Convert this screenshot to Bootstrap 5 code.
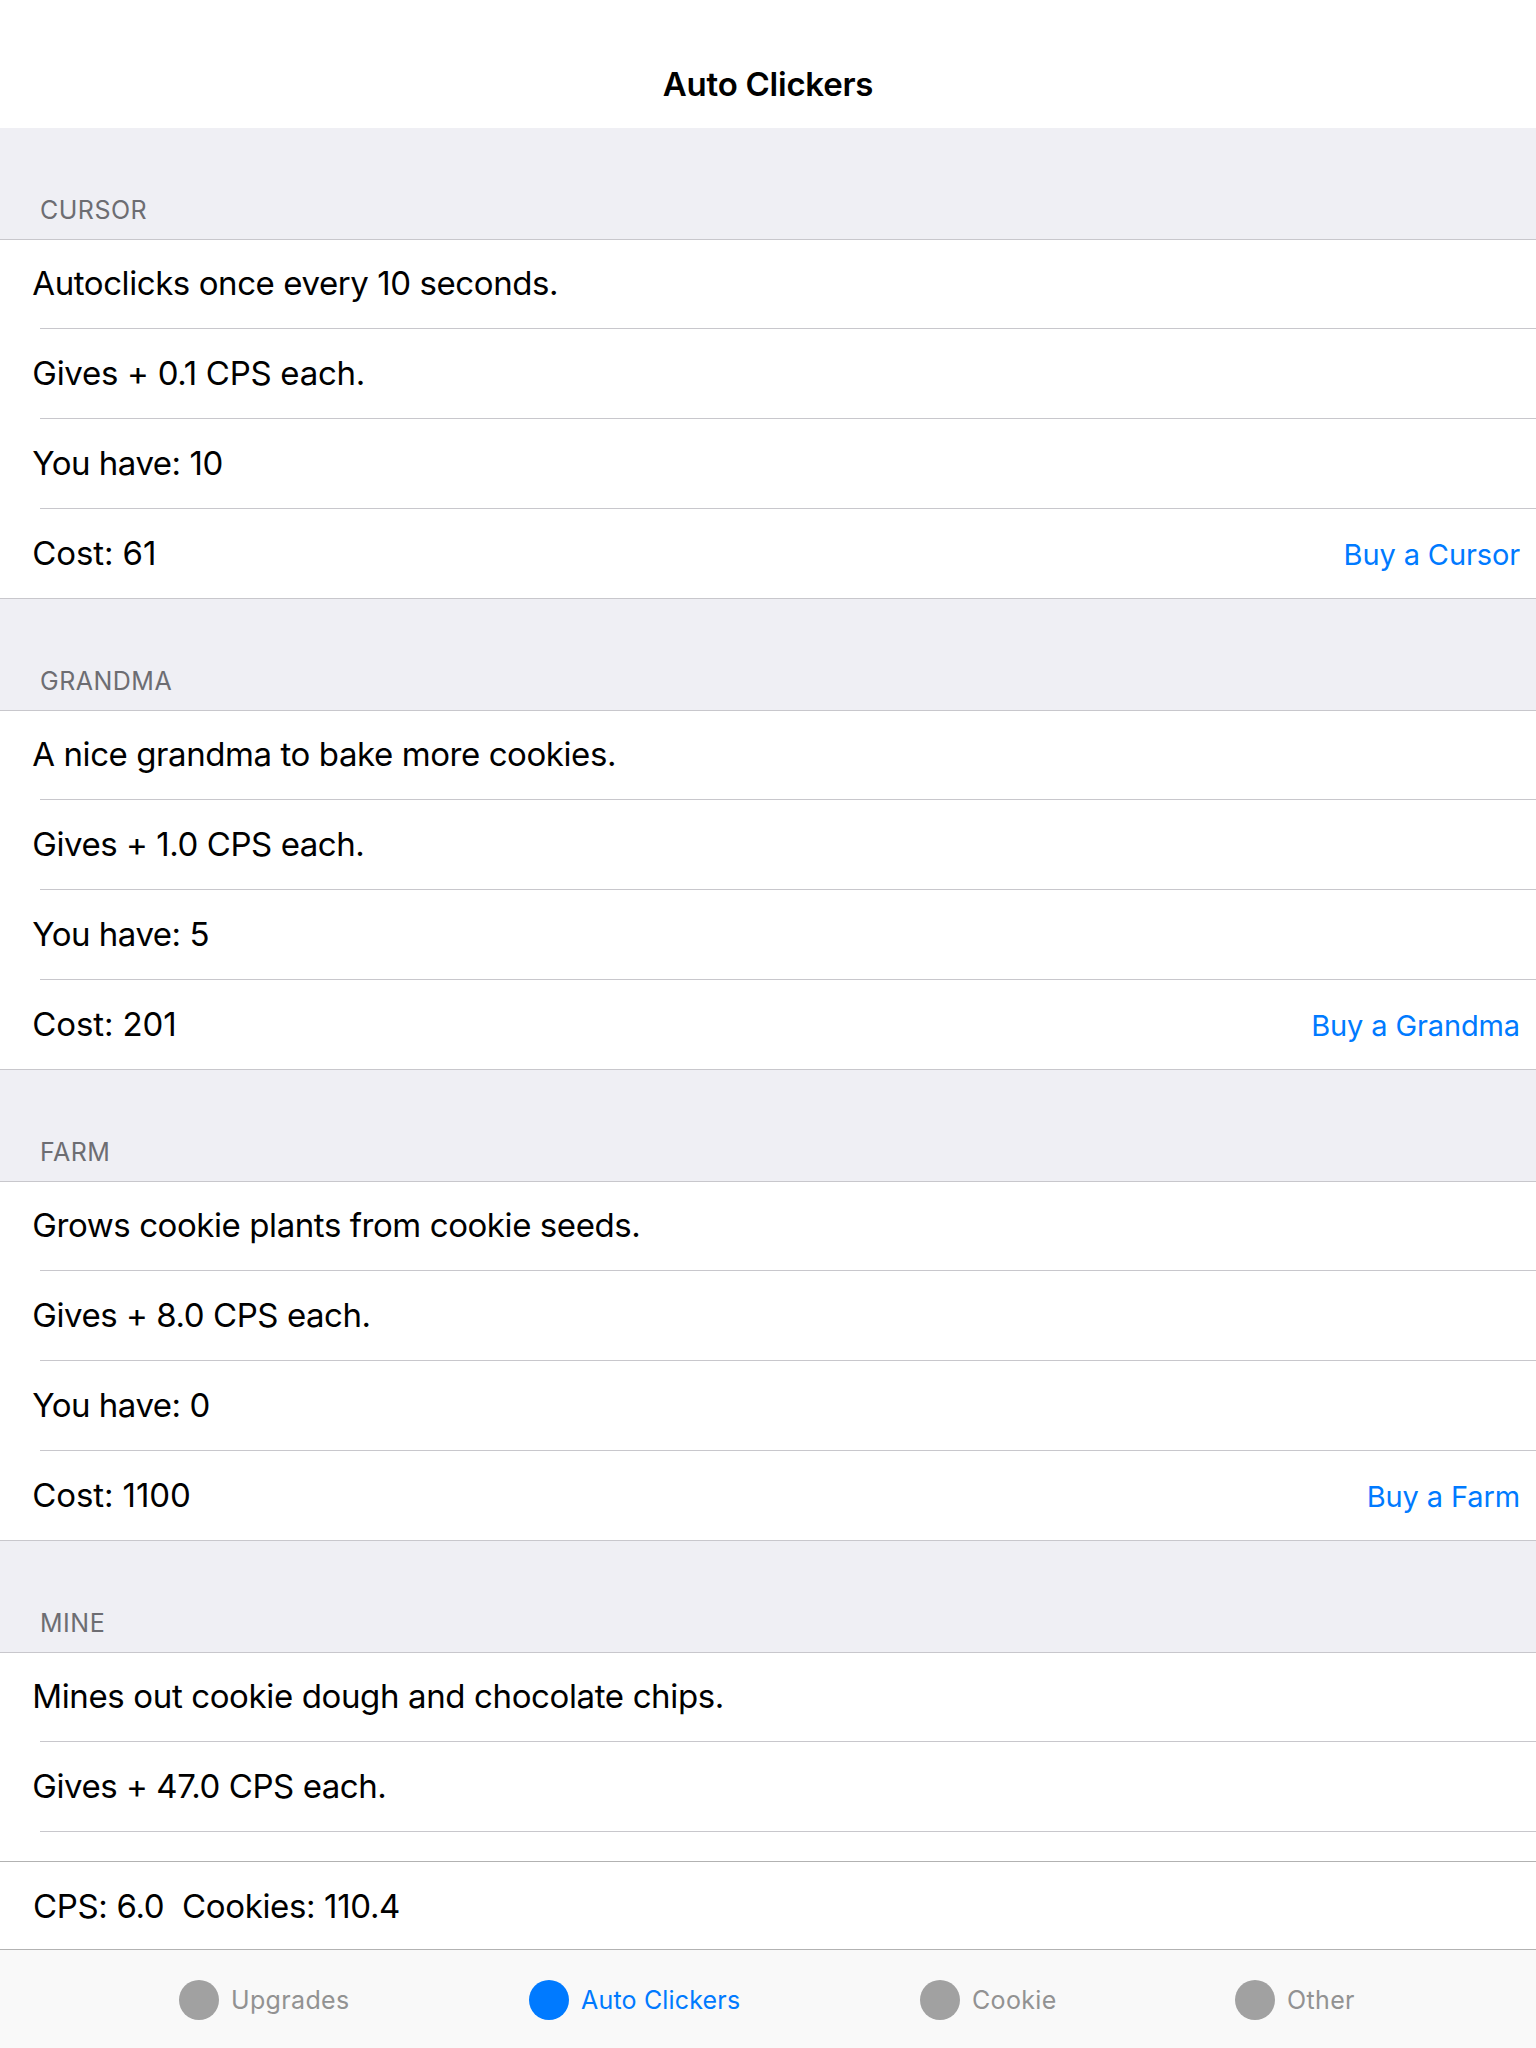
<!DOCTYPE html>
<html lang="en">
<head>
<meta charset="utf-8">
<meta name="viewport" content="width=device-width, initial-scale=1">
<title>Auto Clickers</title>
<link href="https://cdn.jsdelivr.net/npm/bootstrap@5.3.0/dist/css/bootstrap.min.css" rel="stylesheet">
<style>
  body { font-family: Inter, "Liberation Sans", sans-serif; font-size: 33px; line-height: 40px; color: #000; font-kerning: normal; }
  .app-screen { height: 2048px; }
  .title-bar { height: 128px; padding-top: 64px; }
  .title-bar h1 { font-size: 33px; line-height: 40px; letter-spacing: -.25px; font-weight: 600; }
  .shop { background: #efeff4; min-height: 0; }
  .section-title { height: 112px; padding: 67px 0 0 40px; font-size: 25px; line-height: 30px; letter-spacing: .5px; color: #6d6d72; font-weight: 400; border-bottom: 1px solid #c8c7cc; }
  .item-list { --bs-list-group-border-radius: 0; }
  .item-list .list-group-item { height: 90px; padding: 24px 16px 0 32.3px; color: #000; background: #fff; border: 0; display: flex; letter-spacing: -.44px; }
  .item-list .list-group-item:first-child { height: 89px; padding-top: 23px; letter-spacing: -.42px; }
  .item-list .list-group-item:not(.buy-row) { background: linear-gradient(#c8c7cc, #c8c7cc) 40px 100% / 100% 1px no-repeat #fff; }
  .item-list .tenth-row { letter-spacing: -.28px; }
  .item-list .have-row { letter-spacing: -.48px; }
  .item-list .buy-row { border-bottom: 1px solid #c8c7cc; letter-spacing: -.1px; }
  .buy-row .btn { margin-top: 2px; font-size: 29px; line-height: 40px; letter-spacing: -.12px; color: #007aff; }
  .mine-list .list-group-item:first-child { letter-spacing: -.37px; }
  .status-bar { height: 88px; padding: 24px 0 0 33px; border-top: 1px solid #b2b2b2; background: #fff; letter-spacing: -.35px; white-space: pre; }
  .tab-bar { height: 99px; padding: 2px 0 0 179px; gap: 180px; border-top: 1px solid #b2b2b2; background: #f9f9f9; font-size: 25px; line-height: 30px; }
  .tab-bar .nav-link { padding: 0; color: #929292; gap: 12px; white-space: nowrap; letter-spacing: .35px; }
  .tab-bar .active { color: #007aff; letter-spacing: .18px; }
  .tab-bar svg { width: 40px; height: 40px; fill: #a1a1a1; flex: none; }
  .tab-bar .active svg { fill: #007aff; }
  .tab-upgrades { width: 170px; }
  .tab-clickers { width: 211px; }
  .tab-cookie { width: 135px; }
  .tab-other { width: 121px; }
</style>
</head>
<body>
<div class="app-screen d-flex flex-column overflow-hidden">
  <header class="title-bar bg-white text-center flex-shrink-0"><h1 class="m-0">Auto Clickers</h1></header>
  <main class="shop flex-grow-1 overflow-hidden">
    <section>
      <h2 class="section-title m-0">CURSOR</h2>
      <ul class="list-group item-list">
        <li class="list-group-item">Autoclicks once every 10 seconds.</li>
        <li class="list-group-item tenth-row">Gives + 0.1 CPS each.</li>
        <li class="list-group-item have-row">You have: 10</li>
        <li class="list-group-item buy-row justify-content-between align-items-start">Cost: 61<button class="btn p-0 border-0" type="button">Buy a Cursor</button></li>
      </ul>
    </section>
    <section>
      <h2 class="section-title m-0">GRANDMA</h2>
      <ul class="list-group item-list">
        <li class="list-group-item">A nice grandma to bake more cookies.</li>
        <li class="list-group-item">Gives + 1.0 CPS each.</li>
        <li class="list-group-item have-row">You have: 5</li>
        <li class="list-group-item buy-row justify-content-between align-items-start">Cost: 201<button class="btn p-0 border-0" type="button">Buy a Grandma</button></li>
      </ul>
    </section>
    <section>
      <h2 class="section-title m-0">FARM</h2>
      <ul class="list-group item-list">
        <li class="list-group-item">Grows cookie plants from cookie seeds.</li>
        <li class="list-group-item">Gives + 8.0 CPS each.</li>
        <li class="list-group-item have-row">You have: 0</li>
        <li class="list-group-item buy-row justify-content-between align-items-start">Cost: 1100<button class="btn p-0 border-0" type="button">Buy a Farm</button></li>
      </ul>
    </section>
    <section>
      <h2 class="section-title m-0">MINE</h2>
      <ul class="list-group item-list mine-list">
        <li class="list-group-item">Mines out cookie dough and chocolate chips.</li>
        <li class="list-group-item">Gives + 47.0 CPS each.</li>
        <li class="list-group-item"></li>
      </ul>
    </section>
  </main>
  <div class="status-bar flex-shrink-0">CPS: 6.0&nbsp; Cookies: 110.4</div>
  <nav class="tab-bar nav flex-nowrap align-items-center flex-shrink-0">
    <a class="nav-link tab-upgrades d-flex align-items-center" href="#"><svg viewBox="0 0 40 40" aria-hidden="true"><circle cx="20" cy="20" r="20"/></svg>Upgrades</a>
    <a class="nav-link active tab-clickers d-flex align-items-center" href="#"><svg viewBox="0 0 40 40" aria-hidden="true"><circle cx="20" cy="20" r="20"/></svg>Auto Clickers</a>
    <a class="nav-link tab-cookie d-flex align-items-center" href="#"><svg viewBox="0 0 40 40" aria-hidden="true"><circle cx="20" cy="20" r="20"/></svg>Cookie</a>
    <a class="nav-link tab-other d-flex align-items-center" href="#"><svg viewBox="0 0 40 40" aria-hidden="true"><circle cx="20" cy="20" r="20"/></svg>Other</a>
  </nav>
</div>
<script src="https://cdn.jsdelivr.net/npm/bootstrap@5.3.0/dist/js/bootstrap.bundle.min.js"></script>
</body>
</html>
